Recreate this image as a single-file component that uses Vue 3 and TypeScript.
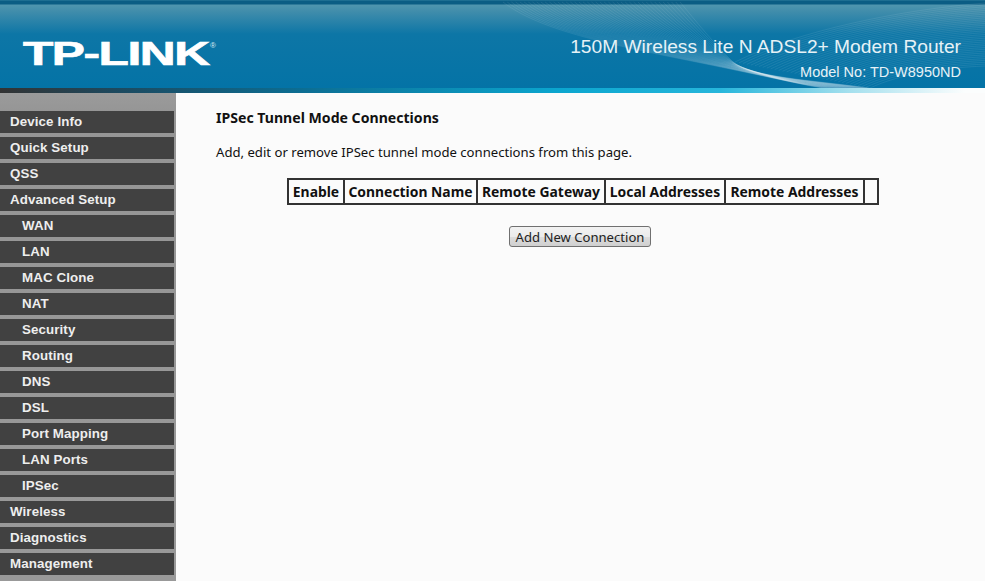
<script setup lang="ts">
const items: { label: string; sub?: boolean }[] = [
  { label: 'Device Info' },
  { label: 'Quick Setup' },
  { label: 'QSS' },
  { label: 'Advanced Setup' },
  { label: 'WAN', sub: true },
  { label: 'LAN', sub: true },
  { label: 'MAC Clone', sub: true },
  { label: 'NAT', sub: true },
  { label: 'Security', sub: true },
  { label: 'Routing', sub: true },
  { label: 'DNS', sub: true },
  { label: 'DSL', sub: true },
  { label: 'Port Mapping', sub: true },
  { label: 'LAN Ports', sub: true },
  { label: 'IPSec', sub: true },
  { label: 'Wireless' },
  { label: 'Diagnostics' },
  { label: 'Management' },
]
const columns = ['Enable', 'Connection Name', 'Remote Gateway', 'Local Addresses', 'Remote Addresses', '']
const widths = [56, 133, 128, 120, 139, 14]

const lerp = (a: number, b: number, t: number) => +(a + (b - a) * t).toFixed(1)

const waveA: string[] = []
const nA = 42
for (let i = 0; i <= nA; i++) {
  const t = i / nA
  const x0 = lerp(503, 680, t)
  waveA.push(
    `M${x0} 2 C${lerp(545, 695, t)} ${lerp(35, 20, t)} ${lerp(640, 715, t)} ${lerp(50, 45, t)} ${lerp(730, 732, t)} ${lerp(69, 61, t)} ` +
      `S${lerp(800, 810, t)} ${lerp(84, 80, t)} ${lerp(822, 870, t)} 88`,
  )
}
const waveB: string[] = []
const nB = 34
for (let i = 0; i <= nB; i++) {
  const t = i / nB
  const y0 = lerp(3, 66, t)
  waveB.push(
    `M985 ${y0} C${lerp(900, 940, t)} ${lerp(10, 68, t)} ${lerp(800, 900, t)} ${lerp(30, 74, t)} ${lerp(735, 870, t)} ${lerp(62, 88, t)}`,
  )
}
</script>

<template>
  <div class="page">
    <header class="banner">
      <svg class="waves" width="985" height="88" viewBox="0 0 985 88" aria-hidden="true">
        <path v-for="(d, i) in waveA" :key="'a' + i" :d="d" class="wave" />
        <path v-for="(d, i) in waveB" :key="'b' + i" :d="d" class="wave" />
      </svg>
      <div class="logo"><span class="logo-text">TP-LINK</span><span class="reg">®</span></div>
      <div class="product">
        <div class="product-name">150M Wireless Lite N ADSL2+ Modem Router</div>
        <div class="model">Model No: TD-W8950ND</div>
      </div>
    </header>
    <div class="strip"></div>
    <div class="body">
      <nav class="side">
        <a v-for="item in items" :key="item.label" class="nav-item" :class="{ sub: item.sub }">{{ item.label }}</a>
      </nav>
      <main class="content">
        <h1 class="title">IPSec Tunnel Mode Connections</h1>
        <p class="desc">Add, edit or remove IPSec tunnel mode connections from this page.</p>
        <table class="conn">
          <colgroup>
            <col v-for="(w, i) in widths" :key="i" :style="{ width: w + 'px' }" />
          </colgroup>
          <tbody>
            <tr>
              <td v-for="(c, i) in columns" :key="i">{{ c }}</td>
            </tr>
          </tbody>
        </table>
        <div class="actions">
          <button class="btn" type="button">Add New Connection</button>
        </div>
      </main>
    </div>
  </div>
</template>

<style scoped>
.page {
  width: 985px;
  height: 581px;
  overflow: hidden;
  display: flex;
  flex-direction: column;
  background: #fbfbfb;
}
.banner {
  position: relative;
  height: 88px;
  flex: none;
  box-sizing: border-box;
  display: flex;
  justify-content: space-between;
  padding: 0 24px 0 23px;
  overflow: hidden;
  background:
    linear-gradient(#2f7f9f 0, #0b5d84 1px, #0b5d84 4px, #4f95ae 5px, #3f8cab 12px, #0d76a6 34px, #0473a6 88px);
}
.waves {
  position: absolute;
  left: 0;
  top: 0;
}
.wave {
  fill: none;
  stroke: #fff;
  stroke-opacity: 0.12;
  stroke-width: 0.7;
}
.logo {
  position: relative;
  margin-top: 41px;
  height: 24px;
  display: flex;
  align-items: flex-start;
}
.logo-text {
  display: block;
  font: bold 34px/24px "Liberation Sans", Arial, sans-serif;
  color: #fff;
  letter-spacing: -1px;
  -webkit-text-stroke: 0.7px #fff;
  transform: scaleX(1.46);
  transform-origin: 0 50%;
  width: 187px;
  white-space: nowrap;
}
.reg {
  font: 8px/10px "Liberation Sans", Arial, sans-serif;
  color: #dfeef5;
}
.product {
  position: relative;
  text-align: right;
  font-family: "Liberation Sans", Arial, sans-serif;
  color: #e6f2f7;
}
.product-name {
  margin-top: 37px;
  font-size: 19.2px;
  line-height: 20px;
  white-space: nowrap;
}
.model {
  margin-top: 7px;
  font-size: 14.5px;
  line-height: 17px;
  white-space: nowrap;
}
.strip {
  height: 5px;
  flex: none;
  background: linear-gradient(90deg, #333 0, #1c4a60 120px, #0c6d92 300px, #0ba6cf 560px, #27b6db 720px, #a5e0ee 850px, #fbfdfd 965px);
}
.body {
  flex: 1;
  display: flex;
  min-height: 0;
}
.side {
  width: 176px;
  flex: none;
  box-sizing: border-box;
  padding: 18px 2px 0 0;
  background: linear-gradient(#9b9b9b, #959595 20px, #999 100%);
  display: flex;
  flex-direction: column;
  gap: 4px;
}
.nav-item {
  height: 22px;
  flex: none;
  box-sizing: border-box;
  padding-left: 10px;
  background: #414141;
  color: #eeeeee;
  font: bold 13.33px/21px "Liberation Sans", Arial, sans-serif;
  letter-spacing: 0.1px;
}
.nav-item.sub {
  padding-left: 22px;
}
.content {
  flex: 1;
  padding: 0 0 0 40px;
  font-family: "Noto Sans", Tahoma, sans-serif;
  color: #111;
}
.title {
  margin: 15px 0 0;
  font-size: 14.1px;
  line-height: 20px;
  font-weight: 700;
}
.desc {
  margin: 14px 0 0;
  font-size: 13.13px;
  line-height: 20px;
}
.conn {
  margin: 16px 0 0 71px;
  width: 590px;
  table-layout: fixed;
  border-collapse: collapse;
  border: 2px solid #333;
}
.conn td {
  height: 23px;
  padding: 0;
  border: 2px solid #333;
  text-align: center;
  font-size: 13.9px;
  line-height: 20px;
  font-weight: 700;
  white-space: nowrap;
  overflow: hidden;
}
.actions {
  margin: 21px 0 0 293px;
}
.btn {
  display: block;
  width: 142px;
  height: 21px;
  padding: 1px 0 0;
  box-sizing: border-box;
  border: 1px solid #707070;
  border-radius: 3px;
  background: linear-gradient(#f2f2f2, #ebebeb 50%, #dddddd 50%, #cfcfcf);
  color: #222;
  font-family: "Noto Sans", Tahoma, sans-serif;
  font-size: 13.1px;
  line-height: 18px;
}
</style>
